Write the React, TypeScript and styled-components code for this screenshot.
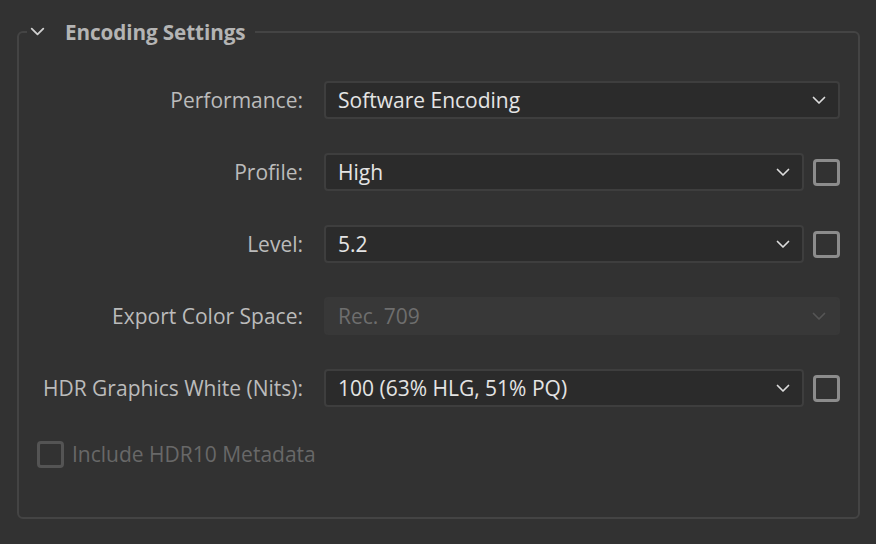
import React from "react";
import styled, { createGlobalStyle } from "styled-components";

const Global = createGlobalStyle`
  html, body { margin: 0; padding: 0; background: #323232; }
  body { font-family: "Open Sans", "Noto Sans", sans-serif; }
  * { box-sizing: border-box; }
`;

const Page = styled.div`
  width: 876px;
  height: 544px;
  padding: 18px 17px 0 17px;
  background: #323232;
`;

const Group = styled.fieldset`
  margin: 0;
  width: 843px;
  height: 501px;
  border: 2px solid #444444;
  border-radius: 6px;
  padding: 35px 18px 0 18px;
  display: flex;
  flex-direction: column;
`;

const Legend = styled.legend`
  margin-left: -10px;
  padding: 0 10px 0 3px;
  display: flex;
  align-items: center;
  gap: 20px;
  color: #b4b4b4;
  font-size: 20.7px;
  font-weight: 700;
  line-height: 28px;
  letter-spacing: -0.1px;
`;

const Rows = styled.div`
  display: flex;
  flex-direction: column;
  gap: 34px;
`;

const Row = styled.div`
  display: flex;
  align-items: center;
  height: 38px;
`;

const Label = styled.div`
  width: 266px;
  text-align: right;
  color: #bbbbbb;
  font-size: 21px;
  white-space: nowrap;
`;

const Control = styled.div`
  margin-left: 21px;
  flex: 1;
  display: flex;
  align-items: center;
  gap: 9px;
`;

const Select = styled.div<{ $disabled?: boolean }>`
  flex: 1;
  height: 38px;
  display: flex;
  align-items: center;
  justify-content: space-between;
  padding: 0 12px 0 12px;
  border-radius: 4px;
  background: ${(p) => (p.$disabled ? "#383838" : "#2b2b2b")};
  border: 2px solid ${(p) => (p.$disabled ? "#383838" : "#3e3e3e")};
  color: ${(p) => (p.$disabled ? "#6e6e6e" : "#e4e4e4")};
  font-size: 21px;
  white-space: nowrap;
`;

const Check = styled.div<{ $disabled?: boolean }>`
  width: 27px;
  height: 27px;
  flex: none;
  border-radius: 4px;
  border: 3px solid ${(p) => (p.$disabled ? "#545454" : "#8c8c8c")};
`;

const CheckRow = styled.div`
  display: flex;
  align-items: center;
  gap: 8px;
  margin-top: 33px;
  color: #686868;
  font-size: 21px;
`;

const Chevron = ({ color = "#dcdcdc", w = 14 }: { color?: string; w?: number }) => (
  <svg width={w} height={w / 2 + 2} viewBox="0 0 14 9" fill="none">
    <path d="M1.5 1.5 L7 7 L12.5 1.5" stroke={color} strokeWidth="1.7" strokeLinecap="round" strokeLinejoin="round" />
  </svg>
);

type Item = { label: string; value: string; check: boolean; disabled?: boolean };

const items: Item[] = [
  { label: "Performance:", value: "Software Encoding", check: false },
  { label: "Profile:", value: "High", check: true },
  { label: "Level:", value: "5.2", check: true },
  { label: "Export Color Space:", value: "Rec. 709", check: false, disabled: true },
  { label: "HDR Graphics White (Nits):", value: "100 (63% HLG, 51% PQ)", check: true },
];

export default function App() {
  return (
    <>
      <Global />
      <Page>
        <Group>
          <Legend>
            <Chevron color="#d0d0d0" w={15} />
            <span>Encoding Settings</span>
          </Legend>
          <Rows>
            {items.map((it) => (
              <Row key={it.label}>
                <Label>{it.label}</Label>
                <Control>
                  <Select $disabled={it.disabled}>
                    <span>{it.value}</span>
                    <Chevron color={it.disabled ? "#555555" : "#dcdcdc"} />
                  </Select>
                  {it.check && <Check />}
                </Control>
              </Row>
            ))}
          </Rows>
          <CheckRow>
            <Check $disabled />
            <span>Include HDR10 Metadata</span>
          </CheckRow>
        </Group>
      </Page>
    </>
  );
}
